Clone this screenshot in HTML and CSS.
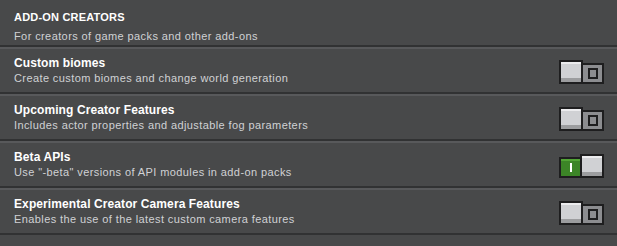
FILE: index.html
```html
<!DOCTYPE html>
<html>
<head>
  <title>Experiments</title>
  <link rel="stylesheet" href="styles.css">
</head>
<body>
  <div class="panel">
    <div class="section-head">
      <div class="section-title">ADD-ON CREATORS</div>
      <div class="section-sub">For creators of game packs and other add-ons</div>
    </div>

    <div class="row">
      <div class="text">
        <div class="name">Custom biomes</div>
        <div class="desc">Create custom biomes and change world generation</div>
      </div>
      <div class="toggle"><span class="thumb"></span><span class="track"><span class="glyph-o"></span></span></div>
    </div>

    <div class="row">
      <div class="text">
        <div class="name">Upcoming Creator Features</div>
        <div class="desc">Includes actor properties and adjustable fog parameters</div>
      </div>
      <div class="toggle"><span class="thumb"></span><span class="track"><span class="glyph-o"></span></span></div>
    </div>

    <div class="row">
      <div class="text">
        <div class="name">Beta APIs</div>
        <div class="desc">Use "-beta" versions of API modules in add-on packs</div>
      </div>
      <div class="toggle on"><span class="track"><span class="glyph-i"></span></span><span class="thumb"></span></div>
    </div>

    <div class="row">
      <div class="text">
        <div class="name">Experimental Creator Camera Features</div>
        <div class="desc">Enables the use of the latest custom camera features</div>
      </div>
      <div class="toggle"><span class="thumb"></span><span class="track"><span class="glyph-o"></span></span></div>
    </div>
  </div>
</body>
</html>
```

FILE: styles.css
```css
body {
  margin: 0;
  background-color: #48494a;
  font-family: 'Liberation Sans', Arial, sans-serif;
  color: #ffffff;
  overflow: hidden;
}
.panel {
  display: flex;
  flex-direction: column;
}
.section-head {
  box-sizing: border-box;
  height: 47px;
  padding: 11px 14px 0;
  display: flex;
  flex-direction: column;
  gap: 6px;
  border-bottom: 2px solid #313233;
}
.section-title {
  font-size: 11px;
  font-weight: bold;
  letter-spacing: 0.2px;
  line-height: 13px;
}
.section-sub {
  font-size: 11px;
  color: #d0d1d4;
  line-height: 12px;
  letter-spacing: 0.4px;
}
.row {
  height: 43px;
  padding: 0 13px 0 14px;
  display: flex;
  align-items: center;
  justify-content: space-between;
  border-top: 2px solid #58595b;
  border-bottom: 2px solid #313233;
}
.text {
  display: flex;
  flex-direction: column;
  gap: 2px;
}
.name {
  font-size: 12px;
  font-weight: bold;
  line-height: 14px;
  letter-spacing: 0.1px;
}
.desc {
  font-size: 11px;
  color: #d0d1d4;
  line-height: 13px;
  letter-spacing: 0.4px;
}
.toggle {
  display: flex;
  align-items: flex-end;
  height: 24px;
  margin-top: 2px;
}
.track {
  box-sizing: border-box;
  width: 23px;
  height: 21px;
  background-color: #8c8d90;
  border: 2px solid #1e1e1f;
  display: flex;
  align-items: center;
  justify-content: center;
}
.thumb {
  box-sizing: border-box;
  width: 24px;
  height: 24px;
  background-color: #d0d1d4;
  border: 2px solid #1e1e1f;
  box-shadow: inset 0 -4px 0 #9c9d9f, inset 0 2px 0 #ececee;
  position: relative;
  z-index: 1;
}
.toggle .thumb + .track {
  margin-left: -2px;
}
.toggle.on .track {
  background-color: #3c8527;
  box-shadow: inset 0 2px 0 #52a535;
  margin-right: -2px;
}
.glyph-o {
  width: 6px;
  height: 7px;
  border: 2px solid #1e1e1f;
}
.glyph-i {
  width: 2px;
  height: 9px;
  background-color: #ffffff;
}
```
